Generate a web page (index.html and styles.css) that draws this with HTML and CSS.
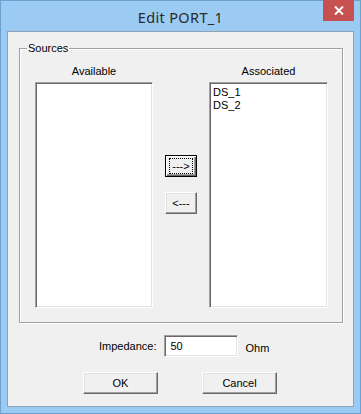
FILE: index.html
```html
<!DOCTYPE html>
<html lang="en">
<head>
  <meta charset="UTF-8">
  <title>Edit PORT_1</title>
  <link rel="stylesheet" href="styles.css">
</head>
<body>
  <div class="window">
    <div class="titlebar">
      <span class="title">Edit PORT_1</span>
      <button class="close" title="Close">
        <svg width="10" height="9" viewBox="0 0 10 9"><path d="M1 0.5 L9 8.5 M9 0.5 L1 8.5" stroke="#fff" stroke-width="2"/></svg>
      </button>
    </div>
    <div class="client">
      <fieldset class="group">
        <legend>Sources</legend>
        <div class="lists">
          <div class="col">
            <div class="col-label">Available</div>
            <div class="listbox"></div>
          </div>
          <div class="movers">
            <button class="btn mover default"><span class="focus">---&gt;</span></button>
            <button class="btn mover">&lt;---</button>
          </div>
          <div class="col">
            <div class="col-label">Associated</div>
            <div class="listbox wide">
              <div class="item">DS_1</div>
              <div class="item">DS_2</div>
            </div>
          </div>
        </div>
      </fieldset>
      <div class="impedance">
        <label for="imp">Impedance:</label>
        <input type="text" id="imp" value="50">
        <span class="unit">Ohm</span>
      </div>
      <div class="actions">
        <button class="btn action">OK</button>
        <button class="btn action">Cancel</button>
      </div>
    </div>
  </div>
</body>
</html>
```

FILE: styles.css
```css
body {
  margin: 0;
  font-family: "Liberation Sans", Arial, sans-serif;
  font-size: 11px;
  color: #000;
  background: #9bcbf2;
}
.window {
  position: relative;
  width: 361px;
  height: 414px;
  box-sizing: border-box;
  border: 1px solid #6e9fcf;
  background: #9bcbf2;
}
.titlebar {
  height: 30px;
  display: flex;
  align-items: center;
  justify-content: center;
}
.title {
  font-family: "Noto Sans", "Open Sans", sans-serif;
  font-size: 14.5px;
  letter-spacing: 0.35px;
  color: #2a2a2a;
  margin-top: 1px;
}
.close {
  position: absolute;
  top: -1px;
  right: 6px;
  width: 31px;
  height: 21px;
  border: none;
  padding: 0;
  background: #c75050;
  display: flex;
  align-items: center;
  justify-content: center;
}
.client {
  margin: 0 6px;
  height: 376px;
  box-sizing: border-box;
  border: 1px solid #8fa3b8;
  background: #f0f0f0;
  padding-top: 10px;
}
.group {
  margin: 0 0 0 11px;
  width: 324px;
  height: 281px;
  box-sizing: border-box;
  padding: 10px 0 0 15px;
  border: 1px solid #a0a0a0;
  box-shadow: inset 1px 1px 0 #fff, 1px 1px 0 #fff;
}
.group legend {
  padding: 0 1px;
  margin-left: -8px;
  line-height: 13px;
}
.lists {
  display: grid;
  grid-template-columns: 118px 56px 119px;
}
.col-label {
  text-align: center;
  line-height: 13px;
  margin-bottom: 4px;
}
.listbox {
  height: 226px;
  box-sizing: border-box;
  background: #fff;
  border: 1px solid;
  border-color: #a0a0a0 #fff #fff #a0a0a0;
  box-shadow: inset 1px 1px 0 #696969, inset -1px -1px 0 #e3e3e3;
  padding: 3px 3px;
}
.item {
  line-height: 13px;
}
.movers {
  display: flex;
  flex-direction: column;
  align-items: center;
  gap: 15px;
  padding-top: 90px;
}
.btn {
  font-family: "Liberation Sans", Arial, sans-serif;
  font-size: 11px;
  color: #000;
  background: #f0f0f0;
  box-sizing: border-box;
  height: 22px;
  padding: 0;
  border: 1px solid;
  border-color: #fff #696969 #696969 #fff;
  box-shadow: inset -1px -1px 0 #a0a0a0, inset 1px 1px 0 #e3e3e3;
}
.mover {
  width: 32px;
}
.mover.default {
  border: 1px solid #000;
  box-shadow: inset 1px 1px 0 #fff, inset -1px -1px 0 #696969, inset -2px -2px 0 #a0a0a0;
  display: flex;
  align-items: center;
  justify-content: center;
}
.focus {
  width: 24px;
  height: 16px;
  box-sizing: border-box;
  border: 1px dotted #000;
  display: flex;
  align-items: center;
  justify-content: center;
}
.impedance {
  display: flex;
  align-items: center;
  margin-top: 12px;
  padding-left: 91px;
  height: 22px;
}
.impedance label {
  margin-right: 8px;
}
.impedance input {
  width: 74px;
  height: 22px;
  box-sizing: border-box;
  margin: 0;
  padding: 0 5px;
  font-family: "Liberation Sans", Arial, sans-serif;
  font-size: 11px;
  border: 1px solid;
  border-color: #a0a0a0 #fff #fff #a0a0a0;
  box-shadow: inset 1px 1px 0 #696969, inset -1px -1px 0 #e3e3e3;
  outline: none;
}
.unit {
  margin-left: 7px;
  padding-top: 3px;
}
.actions {
  display: flex;
  gap: 44px;
  margin-top: 15px;
  padding-left: 75px;
}
.action {
  width: 75px;
}
```
